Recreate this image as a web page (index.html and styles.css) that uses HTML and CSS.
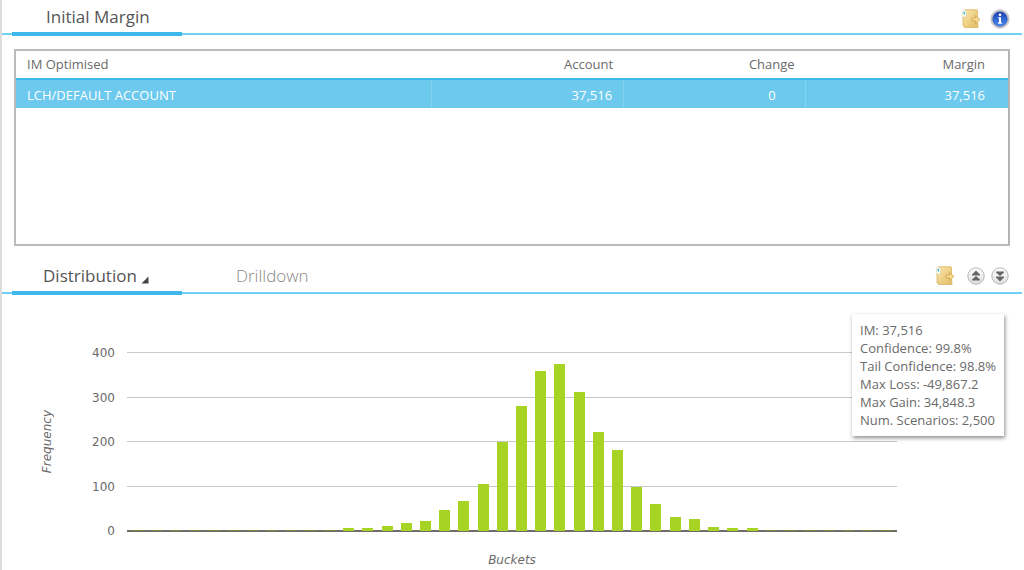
FILE: index.html
```html
<!DOCTYPE html>
<html lang="en">
<head>
<meta charset="utf-8">
<title>Initial Margin</title>
<link rel="stylesheet" href="styles.css">
</head>
<body>
<svg class="defs" aria-hidden="true">
  <defs>
    <linearGradient id="paper" x1="0" y1="0" x2="1" y2="1"><stop offset="0" stop-color="#fbe7ae"/><stop offset="1" stop-color="#e3bb64"/></linearGradient>
    <linearGradient id="blue" x1="0" y1="0" x2="0" y2="1"><stop offset="0" stop-color="#1c3fae"/><stop offset="1" stop-color="#4a8df5"/></linearGradient>
    <linearGradient id="silver" x1="0" y1="0" x2="0" y2="1"><stop offset="0" stop-color="#fdfdfd"/><stop offset="1" stop-color="#dedede"/></linearGradient>
    <symbol id="export" viewBox="0 0 20 20">
      <path d="M4 .8H15.500Q16.500 .8 16.500 2V12.500L17 18.500H3.500V17H2V8L4 7Z" fill="url(#paper)" stroke="#d9b25f" stroke-width=".8"/>
      <path d="M1.300 8V3.500Q1.500 1 3.300 1T5.500 3.500V8Z" fill="#fffdf2" stroke="#d8c9a0" stroke-width=".6"/>
      <path d="M2.300 3.500Q3.200 2 4.200 3.500L3.400 6.500Z" fill="#25b5d5"/>
      <path d="M11 9h3.500V6.500L19 10.500l-4.500 4V12H11Z" fill="#f6d98c" stroke="#cda550" stroke-width=".8"/>
    </symbol>
  </defs>
</svg>
<main class="panel">
  <section>
    <header class="bar">
      <nav class="tabs"><button class="tab tab-on tab-title" type="button">Initial Margin</button></nav>
      <div class="tools tools-top">
        <button class="tool" type="button" aria-label="Export"><svg viewBox="0 0 20 20"><use href="#export"/></svg></button>
        <button class="tool" type="button" aria-label="Information"><svg viewBox="0 0 20 20"><circle cx="10" cy="10" r="9.200" fill="#cfcfd2" stroke="#b4b4b8" stroke-width=".7"/><circle cx="10" cy="10" r="7.300" fill="url(#blue)" stroke="#294aa5" stroke-width=".6"/><circle cx="10" cy="5.700" r="1.300" fill="#fff"/><path d="M8.200 8.200H11v5.300h1v1.200H8v-1.200h1V9.300H8.200Z" fill="#fff"/></svg></button>
      </div>
    </header>
    <div class="frame">
      <table class="grid">
        <colgroup><col class="c-name"><col class="c-account"><col class="c-change"><col class="c-margin"></colgroup>
        <thead><tr><th>IM Optimised</th><th>Account</th><th>Change</th><th>Margin</th></tr></thead>
        <tbody><tr><td>LCH/DEFAULT ACCOUNT</td><td>37,516</td><td class="change">0</td><td>37,516</td></tr></tbody>
      </table>
    </div>
  </section>
  <section class="lower">
    <header class="bar bar-low">
      <nav class="tabs">
        <button class="tab tab-on tab-dist" type="button">Distribution <svg class="corner" viewBox="0 0 8 8" aria-hidden="true"><path d="M7.500 .5V7.500H.5Z" fill="#444"/></svg></button>
        <button class="tab tab-drill" type="button">Drilldown</button>
      </nav>
      <div class="tools tools-low">
        <button class="tool tool-gap" type="button" aria-label="Export"><svg viewBox="0 0 20 20"><use href="#export"/></svg></button>
        <button class="tool" type="button" aria-label="Collapse"><svg viewBox="0 0 20 20"><circle cx="10" cy="10" r="8.200" fill="url(#silver)" stroke="#b5b5b5"/><path d="M10 4.500L14 8.500V9.500H6V8.500ZM10 10L14 13.500V14.500H6V13.500Z" fill="#666"/></svg></button>
        <button class="tool" type="button" aria-label="Expand"><svg viewBox="0 0 20 20"><circle cx="10" cy="10" r="8.200" fill="url(#silver)" stroke="#b5b5b5"/><path d="M6 5.500H14V6.500L10 10L6 6.500ZM6 10.500H14V11.500L10 15.500L6 11.500Z" fill="#666"/></svg></button>
      </div>
    </header>
    <div class="chart">
      <div class="y-title"><span>Frequency</span></div>
      <div class="y-axis"><span>400</span><span>300</span><span>200</span><span>100</span><span>0</span></div>
      <div class="plot">
        <div class="lines"><i></i><i></i><i></i><i></i><i class="base"></i></div>
        <div class="bars">
          <b class="tiny"></b><b class="tiny"></b><b class="tiny"></b><b class="tiny"></b><b class="tiny"></b><b class="tiny"></b><b class="tiny"></b><b class="tiny"></b><b class="tiny"></b><b class="tiny"></b><b class="tiny"></b>
          <b style="height:1.7%"></b><b style="height:1.8%"></b><b style="height:3%"></b><b style="height:4.2%"></b><b style="height:5.8%"></b><b style="height:11.8%"></b><b style="height:16.5%"></b><b style="height:26%"></b><b style="height:50%"></b><b style="height:70%"></b><b style="height:89.5%"></b><b style="height:93.5%"></b><b style="height:77.5%"></b><b style="height:55.3%"></b><b style="height:45.3%"></b><b style="height:24.5%"></b><b style="height:15.2%"></b><b style="height:7.8%"></b><b style="height:6.5%"></b><b style="height:2.5%"></b><b style="height:1.8%"></b><b style="height:1.8%"></b>
          <b class="tiny"></b><b class="tiny"></b><b class="tiny"></b><b class="tiny"></b><b class="tiny"></b><b class="tiny"></b><b class="tiny"></b>
        </div>
      </div>
      <div class="x-title">Buckets</div>
      <ul class="stats"><li>IM: 37,516</li><li>Confidence: 99.8%</li><li>Tail Confidence: 98.8%</li><li>Max Loss: -49,867.2</li><li>Max Gain: 34,848.3</li><li>Num. Scenarios: 2,500</li></ul>
    </div>
  </section>
</main>
</body>
</html>
```
FILE: styles.css
```css
* { box-sizing: border-box; }
body { margin: 0; background: #fff; color: #6a6a6a; font: 13px/18px "Open Sans", "Noto Sans", sans-serif; }
.defs { position: absolute; width: 0; height: 0; }
.panel { border-left: 2px solid #dcdcdc; min-height: 100vh; }
.bar { display: flex; justify-content: space-between; height: 36px; margin-right: 2px; background: linear-gradient(#6fcff5, #6fcff5) 0 33px / 100% 2px no-repeat; }
.tabs { display: flex; padding-left: 10px; }
.tab { border: 0; background: none; font: 300 17px/22px "Open Sans", "Noto Sans", sans-serif; color: #888; text-align: left; white-space: nowrap; padding: 4px 0 2px; }
.tab-on { width: 170px; border-bottom: 4px solid #3db8e8; color: #555; font-weight: 400; }
.tab-title { padding-left: 34px; }
.tab-dist { padding-left: 31px; }
.tab-drill { padding-left: 54px; padding-bottom: 6px; }
.corner { width: 8px; height: 8px; vertical-align: -2px; }
.tools { display: flex; gap: 4px; padding-right: 12px; align-items: center; }
.tools-top { gap: 9px; padding-top: 2px; }
.tools-low { padding-bottom: 2px; }
.tool { border: 0; background: none; padding: 0; width: 20px; height: 20px; }
.tool-gap { margin-right: 7px; }
.tool svg { display: block; width: 20px; height: 20px; }
.frame { margin: 13px 14px 0 12px; height: 197px; border: 2px solid #bbb; border-right-color: #b5b5b5; }
.grid { width: 100%; table-layout: fixed; border-collapse: separate; border-spacing: 0; }
.c-name { width: 417px; width: 41.9%; }
.c-account { width: 19.4%; }
.c-change { width: 18.3%; }
.c-margin { width: 20.4%; }
.grid th, .grid td { padding: 0 11px; text-align: right; font-weight: 400; white-space: nowrap; }
.grid th { height: 29px; padding-bottom: 2px; border-bottom: 2px solid #3db8e8; }
.grid td { height: 28px; padding-top: 1px; background: #6dcaee; color: #fff; border-right: 1px solid #85d3f1; }
.grid th:first-child, .grid td:first-child { text-align: left; }
.grid th:last-child, .grid td:last-child { padding-right: 23px; border-right: 0; }
.grid td.change { padding-right: 29px; }
.lower { padding-top: 12px; }
.bar-low { height: 37px; background-position: 0 34px; }
.chart { position: relative; display: grid; grid-template-columns: 72px 41px 1fr 127px; padding-top: 57px; }
.y-title, .y-axis, .x-title { font-family: "DejaVu Sans", sans-serif; font-size: 12px; line-height: 16px; }
.y-title { display: flex; align-items: center; padding-left: 37px; font-style: italic; }
.y-title span { writing-mode: vertical-rl; transform: rotate(180deg); }
.y-axis { display: flex; flex-direction: column; justify-content: space-between; text-align: right; margin: -7px 0; }
.plot { display: grid; grid-column: 3 / 4; height: 180px; margin-left: 12px; }
.lines, .bars { grid-area: 1 / 1; display: flex; }
.lines { flex-direction: column; justify-content: space-between; }
.lines i { height: 1px; background: #c8c8c8; }
.lines .base { height: 2px; background: #706c6c; }
.bars { justify-content: space-between; align-items: flex-end; padding: 0 5px 1px; }
.bars b { width: 11px; background: #a7d325; }
.bars .tiny { height: 1px; background: #82863b; }
.x-title { grid-column: 3 / 4; padding-left: 12px; padding-top: 20px; text-align: center; font-style: italic; }
.stats { position: absolute; top: 19px; right: 20px; margin: 0; padding: 7px 8px; list-style: none; background: #fff; box-shadow: 1px 2px 4px rgba(0, 0, 0, .45); white-space: nowrap; }
```
